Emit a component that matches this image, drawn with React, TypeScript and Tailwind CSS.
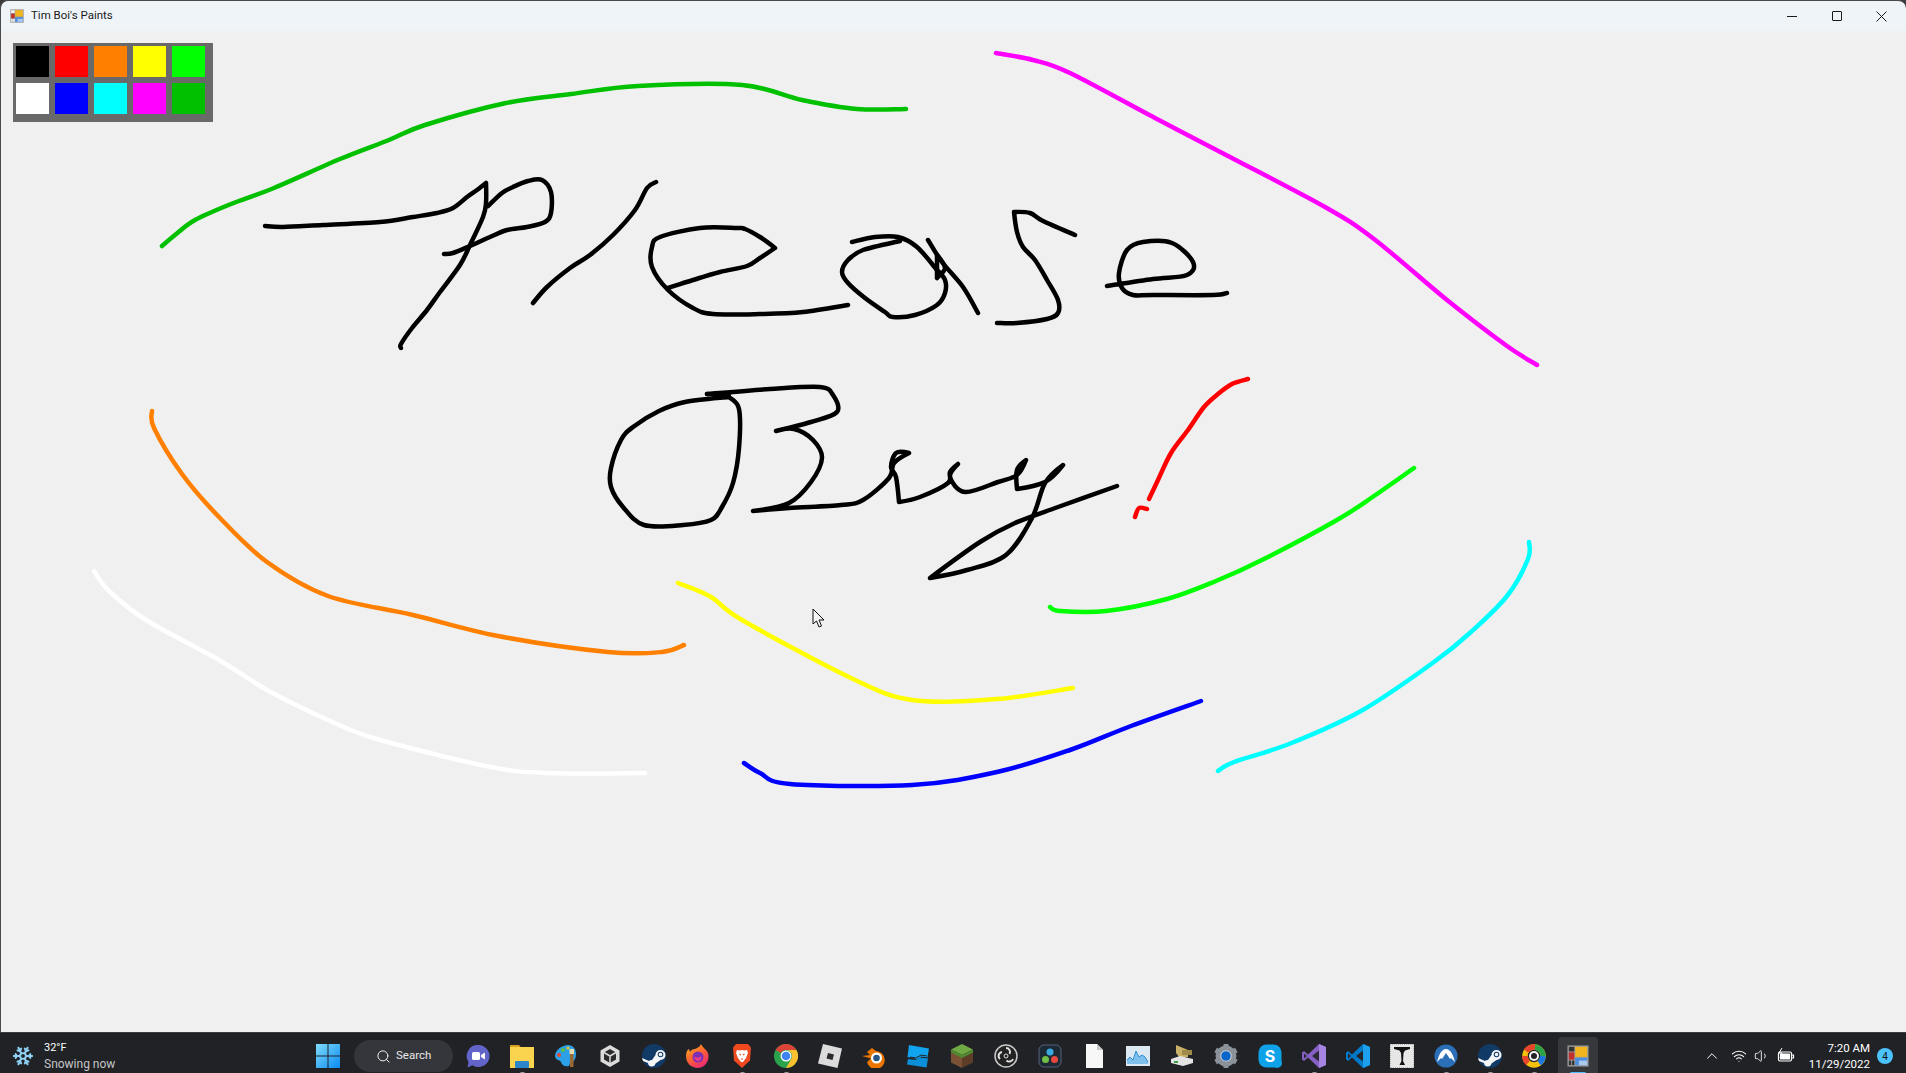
import React from 'react';
import { ChevronUp, Search, Snowflake, Volume1, Wifi } from 'lucide-react';

// strokes are in page coordinates, the svg viewBox starts under the title bar
const strokes: { color: string; pts: string }[] = [
  { color: '#00c000', pts: '162,246 175,235 195,220 231,204 274,188 340,159 389,140 425,125 506,103 571,94 638,86 742,85 802,100 857,109 906,109' },
  { color: '#ff00ff', pts: '996,53 1033,60 1070,73 1155,118 1228,156 1325,207 1374,239 1447,300 1507,346 1537,365' },
  { color: '#ff8000', pts: '152,411 154,428 182,474 219,517 267,562 328,596 413,615 498,636 608,652 662,652 684,645' },
  { color: '#ffffff', pts: '94,571 109,591 146,620 219,660 267,690 328,720 377,739 486,766 547,773 645,773' },
  { color: '#ffff00', pts: '678,583 711,597 742,620 851,678 912,700 997,699 1073,688' },
  { color: '#00ff00', pts: '1050,607 1060,611 1106,611 1167,599 1216,581 1264,559 1337,520 1374,496 1414,468' },
  { color: '#0000ff', pts: '744,763 760,773 790,784 912,785 997,772 1070,750 1131,726 1201,701' },
  { color: '#00ffff', pts: '1529,542 1528,559 1507,596 1471,632 1434,662 1361,711 1289,744 1234,762 1218,771' },
  { color: '#ff0000', pts: '1248,379 1232,384 1218,394 1204,407 1188,430 1171,453 1158,480 1149,499' },
  { color: '#ff0000', pts: '1147,509 1139,508 1135,517' },
  { color: '#000000', pts: '265,226 283,227 323,225 380,222 413,217 437,213 453,208 467,197 477,190 486,183 486,203 483,217 470,245 460,265 440,292 427,310 412,328 401,344 401,348' },
  { color: '#000000', pts: '444,254 453,253 470,246 490,237 507,230 527,227 545,222 551,213 551,192 542,180 528,181 513,187 502,193 488,206' },
  { color: '#000000', pts: '533,303 547,287 570,268 590,255 613,235 635,210 647,188 656,182' },
  { color: '#000000', pts: '668,288 693,280 720,272 747,266 760,258 775,248 760,237 745,229 737,228 700,228 660,237 652,247 652,267 668,290 693,308 713,314 760,314 803,312 848,305' },
  { color: '#000000', pts: '852,242 875,237 898,237 917,247 937,270' },
  { color: '#000000', pts: '900,241 863,250 848,260 842,272 848,283 865,298 885,312 893,317 915,315 937,305 945,293 945,280 937,270 937,278 937,255 945,268 937,278' },
  { color: '#000000', pts: '928,240 942,262 963,287 978,313' },
  { color: '#000000', pts: '997,323 1017,323 1047,319 1058,313 1058,300 1047,280 1035,260 1023,247 1017,232 1014,212 1030,213 1043,221 1075,235' },
  { color: '#000000', pts: '1107,286 1153,279 1187,275 1193,262 1172,243 1143,242 1127,250 1119,273 1122,288 1133,295 1153,295 1213,295 1227,293' },
  { color: '#000000', pts: '729,397 685,402 659,411 633,427 621,440 611,468 611,487 623,507 644,525 683,525 711,520 722,507 733,483 739,448 739,409 729,397' },
  { color: '#000000', pts: '707,394 729,394' },
  { color: '#000000', pts: '707,394 770,389 820,387 833,395 837,412 811,422 776,431 794,429 813,440 822,458 811,482 789,503 753,511 789,508 841,505 863,500 889,478 894,463 909,453 896,453 891,467 896,477 899,502 920,497 948,483 950,472 958,464 950,477 965,492 998,482 1017,475 1026,460 1017,470 1017,489 1045,482 1063,465 1045,483 1032,518 1006,555 967,570 930,578 980,542 1015,523 1058,507 1117,486' },
];

// rounds a hand drawn polyline, real corners are kept sharp
function smooth(pts: string) {
  const p = pts.split(' ').map((s) => s.split(',').map(Number));
  const tangent = (i: number) => {
    const a = p[Math.max(i - 1, 0)];
    const b = p[i];
    const c = p[Math.min(i + 1, p.length - 1)];
    const dot = (b[0] - a[0]) * (c[0] - b[0]) + (b[1] - a[1]) * (c[1] - b[1]);
    if (dot < 0) return [0, 0];
    return [(c[0] - a[0]) / 6, (c[1] - a[1]) / 6];
  };
  let d = `M${p[0][0]} ${p[0][1]}`;
  for (let i = 0; i < p.length - 1; i++) {
    const t0 = tangent(i);
    const t1 = tangent(i + 1);
    d += `C${p[i][0] + t0[0]} ${p[i][1] + t0[1]} ${p[i + 1][0] - t1[0]} ${p[i + 1][1] - t1[1]} ${p[i + 1][0]} ${p[i + 1][1]}`;
  }
  return d;
}

const swatches = ['#000000', '#ff0000', '#ff8000', '#ffff00', '#00ff00', '#ffffff', '#0000ff', '#00ffff', '#ff00ff', '#00c000'];

function PaintsIcon({ size, light }: { size: number; light?: boolean }) {
  const cell = light ? '#f4f4f4' : '#333';
  return (
    <svg width={size} height={size} viewBox="0 0 24 24">
      <rect x="0.500" y="0.500" width="23" height="23" fill="#9b9b9b" />
      <rect x="2" y="2" width="6" height="5" fill={cell} />
      <rect x="2" y="8" width="6" height="8" fill="#c0302c" />
      <rect x="2" y="17" width="2.500" height="5" fill={cell} />
      <rect x="5.500" y="17" width="2.500" height="5" fill={cell} />
      <rect x="9" y="2" width="13" height="11" fill="#f2b51e" />
      <rect x="9" y="14" width="13" height="8" fill="#4c8ee0" />
      <rect x="13" y="17" width="9" height="5" fill="#a9c9ee" />
    </svg>
  );
}

function SteamIcon() {
  return (
    <svg width="24" height="24" viewBox="0 0 24 24">
      <circle cx="12" cy="12" r="12" fill="#123a66" />
      <path d="M0 14l7 3a4 4 0 0 1 3-1l3.500-5a5 5 0 1 1 5 5l-5 3.500A3.800 3.800 0 0 1 6 19l-5-2z" fill="#f4f6f8" />
      <circle cx="18.500" cy="10.500" r="2.800" fill="#123a66" />
      <circle cx="18.500" cy="10.500" r="1.800" fill="#f4f6f8" />
    </svg>
  );
}

const taskIcons: { key: string; running?: boolean; node: React.ReactNode }[] = [
  {
    key: 'teams',
    node: (
      <svg width="24" height="24" viewBox="0 0 24 24">
        <path d="M12.500 1a11 11 0 1 1-6 20.200L1.500 23.500l1-5.500A11 11 0 0 1 12.500 1z" fill="#6264c9" />
        <rect x="6" y="8" width="8" height="8" rx="1.500" fill="#fff" />
        <path d="M15 11l4-2.500v7L15 13z" fill="#fff" />
      </svg>
    ),
  },
  {
    key: 'folder',
    running: true,
    node: (
      <svg width="24" height="24" viewBox="0 0 24 24">
        <path d="M0 1h9l2 2.500H0z" fill="#d9a21b" />
        <rect x="0" y="3" width="24" height="21" fill="#fbd44f" />
        <rect x="5" y="17" width="14" height="7" rx="1" fill="#2a86c9" />
      </svg>
    ),
  },
  {
    key: 'palette',
    node: (
      <svg width="24" height="24" viewBox="0 0 24 24">
        <path d="M14 1c5 0 8 4 8 9 0 3-1 6-3 8l-2-2-2 6c-5 1-7-1-8-4-1-2-6-2-6-6C1 6 8 1 14 1z" fill="#2ba0e6" />
        <circle cx="5" cy="11" r="2" fill="#e2492c" />
        <circle cx="9" cy="6" r="2" fill="#5fbf40" />
        <circle cx="14" cy="4" r="1.600" fill="#e5c334" />
        <rect x="16" y="8" width="3.500" height="15" fill="#9b6a33" />
        <rect x="15.500" y="5" width="4.500" height="5" fill="#e8d9b0" />
      </svg>
    ),
  },
  {
    key: 'unity',
    node: (
      <svg width="24" height="24" viewBox="0 0 24 24">
        <path d="M12 1l9.500 5.500v11L12 23l-9.500-5.500v-11z" fill="#dcdcdc" />
        <path d="M12 5l6 3.500v7L12 19l-6-3.500v-7z" fill="#2c2c2c" />
        <path d="M12 12v7M12 12l6-3.500M12 12l-6-3.500" stroke="#dcdcdc" strokeWidth="1.500" />
      </svg>
    ),
  },
  { key: 'steam', node: <SteamIcon /> },
  {
    key: 'firefox',
    node: (
      <svg width="24" height="24" viewBox="0 0 24 24">
        <defs>
          <linearGradient id="ffx" x1="0" y1="0" x2="0.600" y2="1">
            <stop offset="0" stopColor="#ffbd2e" />
            <stop offset="0.500" stopColor="#ff6a2c" />
            <stop offset="1" stopColor="#ea2d70" />
          </linearGradient>
        </defs>
        <path d="M15 0c1 3 5 5 7 9 2 6-2 15-10 15C5 24 0 19 0 12c0-3 1-6 3-7l1 3c1-2 3-3 5-3 2-1 5-2 6-5z" fill="url(#ffx)" />
        <circle cx="12" cy="13" r="5.500" fill="#7a2fb5" />
        <path d="M8 12c2 2 5 2 7 0 1 3-1 5-3 5s-4-2-4-5z" fill="#e63c8c" />
      </svg>
    ),
  },
  {
    key: 'brave',
    running: true,
    node: (
      <svg width="24" height="24" viewBox="0 0 24 24">
        <path d="M6 0h12l3 3.500-1 13L12 24 4 16.500 3 3.500z" fill="#f0481f" />
        <path d="M7 6l3 .5 2-.5 2 .5 3-.5 1 3-2 5-3 4h-2l-3-4-2-5z" fill="#fff" />
        <path d="M9.500 10l1.500 1M14.500 10L13 11M11 15h2" stroke="#f0481f" strokeWidth="1.200" />
      </svg>
    ),
  },
  {
    key: 'chrome',
    running: true,
    node: (
      <svg width="24" height="24" viewBox="0 0 24 24">
        <circle cx="12" cy="12" r="12" fill="#2ba24c" />
        <path d="M1.600 6A12 12 0 0 1 22.400 6H12a6 6 0 0 0-5.200 3z" fill="#dd4438" />
        <path d="M22.400 6A12 12 0 0 1 12 24l5.200-9A6 6 0 0 0 12 6z" fill="#fbc02d" />
        <circle cx="12" cy="12" r="5.500" fill="#fff" />
        <circle cx="12" cy="12" r="4.300" fill="#3f83ee" />
      </svg>
    ),
  },
  {
    key: 'roblox',
    node: (
      <svg width="24" height="24" viewBox="0 0 24 24">
        <path d="M5 0l19 4.500L19.500 24 0 19.500z" fill="#dcdcdc" />
        <path d="M10 9l6 1.500-1.500 5.500-6-1.500z" fill="#2a2a2a" />
      </svg>
    ),
  },
  {
    key: 'blender',
    node: (
      <svg width="24" height="24" viewBox="0 0 24 24">
        <path d="M0 12l8-1-3-3 5-4 4 3a9 9 0 1 1-9 11l4-3.500z" fill="#ea7600" />
        <circle cx="14.500" cy="14" r="5.500" fill="#fff" />
        <circle cx="14.500" cy="14" r="3.300" fill="#265787" />
      </svg>
    ),
  },
  {
    key: 'studio',
    node: (
      <svg width="24" height="24" viewBox="0 0 24 24">
        <path d="M3 1l20 3.500-1.500 9-6-1-4.500 2.500L1.500 13z" fill="#12a4ee" />
        <path d="M2 15l7 1 5-2.500 8 1-1.500 9L1 20.500z" fill="#0a8fd8" />
        <path d="M4 13l6 1 5-3 6 1" stroke="#222" strokeWidth="1" fill="none" />
      </svg>
    ),
  },
  {
    key: 'minecraft',
    node: (
      <svg width="24" height="24" viewBox="0 0 24 24">
        <path d="M12 0l11 5.500L12 11 1 5.500z" fill="#6fa944" />
        <path d="M1 5.500L12 11v13L1 18.500z" fill="#7a5134" />
        <path d="M23 5.500L12 11v13l11-5.500z" fill="#5d3d27" />
        <path d="M1 5.500L12 11l11-5.500v3L12 14 1 8.500z" fill="#4f8a33" />
      </svg>
    ),
  },
  {
    key: 'obs',
    node: (
      <svg width="24" height="24" viewBox="0 0 24 24">
        <circle cx="12" cy="12" r="11" fill="#222" stroke="#c8c8c8" strokeWidth="1.500" />
        <path d="M12 4a4 4 0 0 1 3.500 6M19 15a4 4 0 0 1-6.500 1.500M6 15a4 4 0 0 1 2-7" stroke="#e0e0e0" strokeWidth="2" fill="none" />
        <circle cx="12" cy="12" r="2" fill="#222" stroke="#e0e0e0" />
      </svg>
    ),
  },
  {
    key: 'davinci',
    node: (
      <svg width="24" height="24" viewBox="0 0 24 24">
        <rect x="1" y="1" width="22" height="22" rx="5" fill="#1c2a36" stroke="#56617a" />
        <circle cx="12" cy="8" r="3.500" fill="#3ba8e0" />
        <circle cx="7.500" cy="15.500" r="3.500" fill="#6fbe45" />
        <circle cx="16.500" cy="15.500" r="3.500" fill="#e8483f" />
      </svg>
    ),
  },
  {
    key: 'file',
    node: (
      <svg width="24" height="24" viewBox="0 0 24 24">
        <path d="M4 0h11l6 6v18H4z" fill="#f7f7f7" />
        <path d="M15 0l6 6h-6z" fill="#c8c8c8" />
      </svg>
    ),
  },
  {
    key: 'perfmon',
    node: (
      <svg width="24" height="24" viewBox="0 0 24 24">
        <rect x="0" y="2" width="24" height="20" fill="#dce8f2" />
        <path d="M1 20V16l3-3 3 3 3-9 3 6 3-2 3 2 3 5v2z" fill="#7fc0ec" />
        <path d="M1 16l3-3 3 3 3-9 3 6 3-2 3 2 3 5" stroke="#2e8fd6" strokeWidth="1" fill="none" />
      </svg>
    ),
  },
  {
    key: 'usb',
    node: (
      <svg width="24" height="24" viewBox="0 0 24 24">
        <path d="M6 1l12 5v7H9L6 9z" fill="#c8b068" />
        <path d="M12 6h10v5H12z" fill="#a08a48" />
        <path d="M1 15l9-3 13 3v4l-10 3-12-3z" fill="#e4e4e4" />
        <rect x="4" y="17" width="4" height="2" fill="#3aa04a" />
      </svg>
    ),
  },
  {
    key: 'gear',
    node: (
      <svg width="24" height="24" viewBox="0 0 24 24">
        <circle cx="12" cy="12" r="8" fill="none" stroke="#8b929a" strokeWidth="5" />
        <path d="M12 0v5M12 19v5M1.600 6L6 8.500M18 15.500l4.400 2.500M22.400 6L18 8.500M6 15.500L1.600 18" stroke="#8b929a" strokeWidth="5" />
        <circle cx="12" cy="12" r="5.800" fill="#e0e4e8" />
        <circle cx="12" cy="12" r="4.800" fill="#0a66c8" />
      </svg>
    ),
  },
  {
    key: 'skype',
    node: (
      <svg width="24" height="24" viewBox="0 0 24 24">
        <rect x="0.500" y="0.500" width="23" height="23" rx="8" fill="#0ea2e8" />
        <circle cx="19" cy="19" r="5" fill="#0ea2e8" />
        <text x="12" y="18" textAnchor="middle" fontFamily="Inter, sans-serif" fontWeight="700" fontSize="16" fill="#fff">S</text>
      </svg>
    ),
  },
  {
    key: 'vs',
    running: true,
    node: (
      <svg width="24" height="24" viewBox="0 0 24 24">
        <path d="M17 0l7 3v18l-7 3-11-10.500L2 17l-2-1.500v-7L2 7l4 3.500z" fill="#8661c5" />
        <path d="M17 6.500v11L10 12z" fill="#2d2a38" />
        <path d="M2 9.500v5L5 12z" fill="#2d2a38" />
        <path d="M17 0l7 3v18l-7 3z" fill="#a685e2" />
      </svg>
    ),
  },
  {
    key: 'vscode',
    node: (
      <svg width="24" height="24" viewBox="0 0 24 24">
        <path d="M17 0l7 3v18l-7 3-11-10.500L2 17l-2-1.500v-7L2 7l4 3.500z" fill="#0078c8" />
        <path d="M17 6.500v11L10 12z" fill="#232428" />
        <path d="M2 9.500v5L5 12z" fill="#232428" />
        <path d="M17 0l7 3v18l-7 3z" fill="#1ca0ee" />
      </svg>
    ),
  },
  {
    key: 'tool',
    node: (
      <svg width="24" height="24" viewBox="0 0 24 24">
        <rect x="0" y="0" width="24" height="24" fill="#e6e6e6" stroke="#888" strokeDasharray="1 1" />
        <path d="M4 3h16v2l-5 1.500-1.500 2.500-.5 8 2 4H9.500l2-4-.5-8-1.500-2.500L4 5z" fill="#111" />
      </svg>
    ),
  },
  {
    key: 'nord',
    running: true,
    node: (
      <svg width="24" height="24" viewBox="0 0 24 24">
        <circle cx="12" cy="12" r="11.500" fill="#2a6fb8" />
        <path d="M3 18C5 10 8 5 12 5s7 5 9 13l-4-4-1 1-4-6-4 6-1-1z" fill="#fff" />
      </svg>
    ),
  },
  { key: 'steam2', running: true, node: <SteamIcon /> },
  {
    key: 'swirl',
    running: true,
    node: (
      <svg width="24" height="24" viewBox="0 0 24 24" fill="none" strokeWidth="5.500">
        <circle cx="12" cy="12" r="9" stroke="#f4c20d" />
        <path d="M4 7a10 10 0 0 1 9-4" stroke="#e8452c" />
        <path d="M3 12a9 9 0 0 0 3 7" stroke="#e8452c" />
        <path d="M13 3a9 9 0 0 1 8 9" stroke="#2ba24c" />
        <path d="M21 12a9 9 0 0 1-4 7" stroke="#1a78e6" />
        <circle cx="12" cy="12" r="5" fill="#f6f6f6" stroke="none" />
        <circle cx="12" cy="12" r="3" fill="#202226" stroke="none" />
      </svg>
    ),
  },
];

function BatteryIcon() {
  return (
    <svg width="20" height="16" viewBox="0 0 20 16" fill="none" stroke="#fff" strokeWidth="1.200">
      <rect x="2.500" y="4" width="13" height="9" rx="1.500" />
      <rect x="4" y="5.500" width="10" height="6" fill="#fff" stroke="none" />
      <path d="M16 7h1.500v3H16" />
      <path d="M6 0L3 5h3l-2 5" stroke="#fff" strokeWidth="1" />
    </svg>
  );
}

export default function App() {
  return (
    <div className="flex h-[1073px] w-full flex-col overflow-hidden bg-[#3b3b3b] font-['Roboto',sans-serif]">
      <div className="flex h-[31px] shrink-0 items-center rounded-t-lg border-l border-t border-[#4a4a4a] bg-[#eff4f9] pl-[9px]">
        <PaintsIcon size={14} light />
        <span className="ml-[7px] text-[11.5px] text-[#1a1a1a]">Tim Boi's Paints</span>
        <div className="ml-auto flex h-full items-center pr-[2px]">
          <div className="flex h-full w-[45px] items-center justify-center">
            <div className="h-px w-[10px] bg-[#1a1a1a]" />
          </div>
          <div className="flex h-full w-[45px] items-center justify-center">
            <div className="h-[10px] w-[10px] rounded-[1px] border border-[#1a1a1a]" />
          </div>
          <div className="flex h-full w-[45px] items-center justify-center">
            <svg width="11" height="11" viewBox="0 0 11 11" stroke="#1a1a1a" strokeWidth="1">
              <path d="M.5.5l10 10M10.500.5l-10 10" />
            </svg>
          </div>
        </div>
      </div>

      <div className="relative flex-1 border-l border-[#4a4a4a] bg-[#f0f0f0]">
        <svg className="absolute left-[-1px] top-0" width="1906" height="1001" viewBox="0 31 1906 1001" fill="none">
          {strokes.map((s, i) => (
            <path key={i} d={smooth(s.pts)} stroke={s.color} strokeWidth="4.500" strokeLinecap="round" strokeLinejoin="round" />
          ))}
          <path d="M813 609v15l3.500-3 2.500 6 2.500-1-2.500-6h5z" fill="#f4f4f4" stroke="#111" strokeWidth="1" />
        </svg>
        <div className="absolute left-[12px] top-[12px] grid w-[200px] grid-cols-[repeat(5,33px)] grid-rows-[repeat(2,31px)] gap-[6px] bg-[#696969] pb-[8px] pl-[3px] pt-[3px]">
          {swatches.map((c) => (
            <div key={c} style={{ backgroundColor: c }} />
          ))}
        </div>
      </div>

      <div className="flex h-[41px] shrink-0 items-center border-t border-[#3d3d3d] bg-[#202226] pt-[6px]">
        <div className="flex w-[306px] items-center pl-[12px]">
          <Snowflake size={22} color="#8fd0f5" strokeWidth={2.2} />
          <div className="ml-[10px] flex flex-col leading-[16px]">
            <span className="text-[11px] text-white">32°F</span>
            <span className="text-[12px] text-[#c6c6c6]">Snowing now</span>
          </div>
        </div>
        <div className="flex w-[44px] items-center justify-center">
          <svg width="24" height="24" viewBox="0 0 24 24">
            <defs>
              <linearGradient id="win" x1="0" y1="0" x2="1" y2="1">
                <stop offset="0" stopColor="#7fdcfb" />
                <stop offset="1" stopColor="#0a8af0" />
              </linearGradient>
            </defs>
            <path d="M0 0h11.500v11.500H0zM12.500 0H24v11.500H12.500zM0 12.500h11.500V24H0zM12.500 12.500H24V24H12.500z" fill="url(#win)" />
          </svg>
        </div>
        <div className="ml-[4px] flex h-[32px] w-[99px] items-center rounded-full bg-[#34363b] pl-[22px]">
          <Search size={15} color="#f0f0f0" strokeWidth={1.6} />
          <span className="ml-[5px] text-[11.5px] text-[#e8e8e8]">Search</span>
        </div>
        <div className="ml-[3px] flex">
          {taskIcons.map((icon) => (
            <div key={icon.key} className="relative flex h-[34px] w-[44px] items-center justify-center">
              {icon.node}
              {icon.running && <div className="absolute bottom-[-2px] h-[3px] w-[5px] rounded-full bg-[#9a9a9a]" />}
            </div>
          ))}
          <div className="relative flex h-[34px] w-[44px] items-center justify-center">
            <div className="absolute bottom-[-3px] left-[2px] top-[-2px] w-[40px] rounded-t-[4px] bg-[#36383c]" />
            <div className="relative">
              <PaintsIcon size={22} />
            </div>
            <div className="absolute bottom-[-2px] left-[14px] h-[3px] w-[16px] rounded-full bg-[#4cc2ff]" />
          </div>
        </div>

        <div className="ml-auto flex items-center pr-[13px]">
          <div className="flex w-[29px] justify-center">
            <ChevronUp size={18} color="#fff" strokeWidth={1.3} />
          </div>
          <div className="flex w-[26px] justify-center">
            <Wifi size={16} color="#fff" strokeWidth={1.6} />
          </div>
          <div className="flex w-[20px] justify-center">
            <Volume1 size={16} color="#fff" strokeWidth={1.3} />
          </div>
          <div className="flex w-[28px] justify-center">
            <BatteryIcon />
          </div>
          <div className="flex w-[70px] flex-col text-right text-[11.5px] leading-[16px] text-white">
            <span>7:20 AM</span>
            <span>11/29/2022</span>
          </div>
          <div className="ml-[7px] flex h-[16px] w-[16px] items-center justify-center rounded-full bg-[#4cc2ff] text-[10px] text-[#111]">4</div>
        </div>
      </div>
    </div>
  );
}
